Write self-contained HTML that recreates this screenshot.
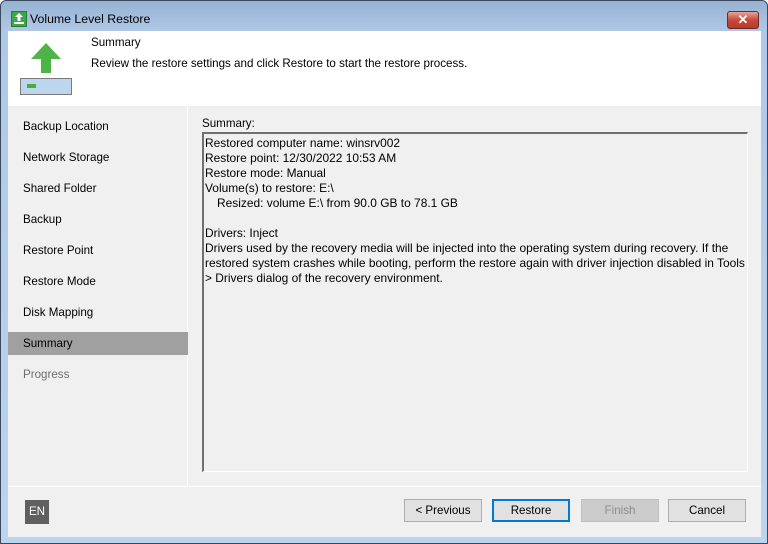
<!DOCTYPE html>
<html><head><style>
*{margin:0;padding:0;box-sizing:border-box}
body{width:768px;height:544px;overflow:hidden;font-family:"Liberation Sans",sans-serif;font-size:11.6px;color:#000;background:#fff}
.win{position:absolute;left:0;top:0;width:768px;height:544px;border:1px solid #3a4a5c;border-radius:6px 6px 0 0;background:linear-gradient(#97b2d2 0,#afc8e6 30px,#bcd4ee 100%)}
.title{position:absolute;left:29px;top:11px;font-size:12.3px;color:#000}
.ticon{position:absolute;left:10px;top:10px;width:16px;height:16px;background:#3da84a;border:1px solid #2a7a34}
.close{position:absolute;left:726px;top:10px;width:32px;height:18px;border:1px solid #6b2a22;border-radius:3px;background:linear-gradient(#e5a59a,#c8493a 50%,#b63a2a);color:#fff;font-weight:bold;text-align:center;font-size:13px;line-height:16px}
.client{position:absolute;left:7px;top:30px;width:753px;height:506px;background:#f0f0f0}
.hdr{position:absolute;left:0;top:0;width:753px;height:75px;background:#fff}
.nav{position:absolute;left:0;top:75px;width:180px;height:380px;background:#f0f0f0;border-right:1px solid #fff}
.nav div{position:absolute;left:15px}
.sel{position:absolute;left:0;top:226px;width:180px;height:23px;background:#a0a0a0}
.box{position:absolute;left:194px;top:101px;width:546px;height:340px;border:1px solid #fff;border-top:2px solid #707070;border-left:2px solid #707070}
.box p{position:absolute;left:1px;white-space:nowrap;font-size:11.95px}
.btn{position:absolute;top:468px;width:78px;height:23px;border:1px solid #adadad;background:#e1e1e1;text-align:center;line-height:21px}
</style></head><body>
<div class="win">
<div class="ticon"><svg width="14" height="14" viewBox="0 0 14 14"><path d="M7 1L3 5h2.5v4h3V5H11z" fill="#fff"/><rect x="2" y="10" width="10" height="2" fill="#fff"/></svg></div>
<div class="title">Volume Level Restore</div>
<div class="close">✕</div>
<div class="client">
 <svg style="position:absolute;left:0;top:0" width="80" height="75" viewBox="0 0 80 75"><rect width="80" height="75" fill="#fff"/><path d="M38 12L23 28h10v14h10V28h10z" fill="#4db446"/><rect x="12.5" y="47.5" width="51" height="16" fill="#bcd6ee" stroke="#7a7a7a"/><rect x="19" y="53" width="9" height="4" fill="#43b03e"/></svg>
 <div class="hdr" style="left:80px;width:673px">
  <div style="position:absolute;left:3px;top:5px">Summary</div>
  <div style="position:absolute;left:3px;top:26px">Review the restore settings and click Restore to start the restore process.</div>
 </div>
 <div class="nav">
  <div class="sel" style="left:0"></div>
  <div style="top:14px">Backup Location</div>
  <div style="top:45px">Network Storage</div>
  <div style="top:76px">Shared Folder</div>
  <div style="top:107px">Backup</div>
  <div style="top:138px">Restore Point</div>
  <div style="top:169px">Restore Mode</div>
  <div style="top:200px">Disk Mapping</div>
  <div style="top:231px">Summary</div>
  <div style="top:262px;color:#6d6d6d">Progress</div>
 </div>
 <div style="position:absolute;left:194px;top:86px">Summary:</div>
 <div class="box">
  <p style="top:2px">Restored computer name: winsrv002</p>
  <p style="top:17px">Restore point: 12/30/2022 10:53 AM</p>
  <p style="top:32px">Restore mode: Manual</p>
  <p style="top:47px">Volume(s) to restore: E:\</p>
  <p style="top:62px;left:13px">Resized: volume E:\ from 90.0 GB to 78.1 GB</p>
  <p style="top:92px">Drivers: Inject</p>
  <p style="top:107px">Drivers used by the recovery media will be injected into the operating system during recovery. If the</p>
  <p style="top:122px">restored system crashes while booting, perform the restore again with driver injection disabled in Tools</p>
  <p style="top:137px">&gt; Drivers dialog of the recovery environment.</p>
 </div>
 <div style="position:absolute;left:0;top:455px;width:753px;height:1px;background:#fff"></div>
 <div style="position:absolute;left:17px;top:469px;width:24px;height:24px;background:#5f5f5f;color:#fff;text-align:center;line-height:24px">EN</div>
 <div class="btn" style="left:396px">&lt; Previous</div>
 <div class="btn" style="left:484px;border:2px solid #0078d7;line-height:19px">Restore</div>
 <div class="btn" style="left:573px;background:#ccc;border-color:#bfbfbf;color:#8d8d8d">Finish</div>
 <div class="btn" style="left:660px">Cancel</div>
</div>
</div>
</body></html>
